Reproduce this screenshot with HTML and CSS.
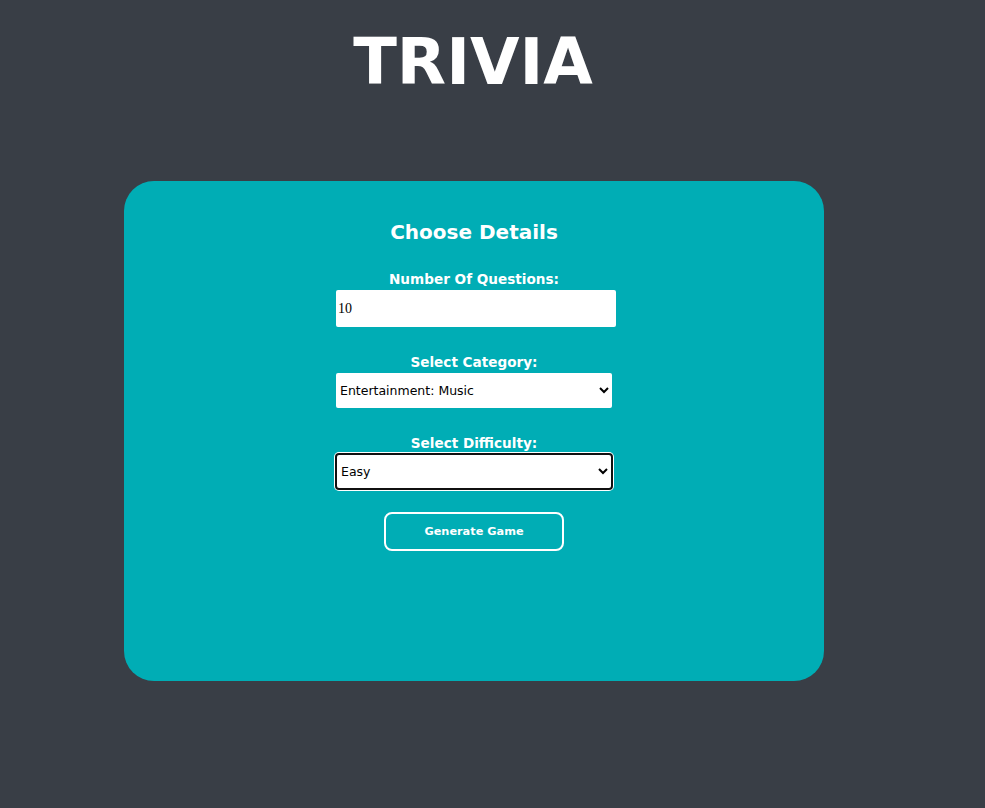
FILE: index.html
```html
<!DOCTYPE html>
<html lang="en">
<head>
<meta charset="utf-8">
<title>Trivia</title>
<link rel="stylesheet" href="styles.css">
</head>
<body>
<div class="page">
  <h1 class="title">TRIVIA</h1>
  <div class="card">
    <h2 class="card-title">Choose Details</h2>
    <label class="field-label" for="num">Number Of Questions:</label>
    <input class="num-input" id="num" type="number" value="10">
    <label class="field-label gap" for="cat">Select Category:</label>
    <select class="select" id="cat">
      <option>Entertainment: Music</option>
    </select>
    <label class="field-label gap" for="diff">Select Difficulty:</label>
    <select class="select focused" id="diff">
      <option>Easy</option>
    </select>
    <button class="btn" type="button">Generate Game</button>
  </div>
</div>
</body>
</html>
```

FILE: styles.css
```css
html, body {
  margin: 0;
  padding: 0;
}
body {
  background: #393e46;
  color: #ffffff;
  font-family: "Comic Sans MS", "DejaVu Sans", sans-serif;
  min-height: 808px;
}
.page {
  width: 700px;
  margin-left: 124px;
  padding-top: 22px;
}
.title {
  margin: 0;
  text-align: center;
  font-size: 64px;
  line-height: 80px;
  font-weight: 700;
  padding-right: 2px;
}
.card {
  margin-top: 79px;
  height: 500px;
  box-sizing: border-box;
  background: #00adb5;
  border-radius: 30px;
  padding-top: 36px;
  display: flex;
  flex-direction: column;
  align-items: center;
}
.card-title {
  margin: 0 0 22px;
  font-size: 20px;
  line-height: 30px;
  font-weight: 700;
}
.field-label {
  font-size: 13.6px;
  line-height: 20px;
  font-weight: 700;
}
.field-label.gap {
  margin-top: 25px;
}
.num-input {
  margin-top: 1px;
  margin-left: 4px;
  width: 280px;
  height: 37px;
  box-sizing: border-box;
  border: none;
  border-radius: 2px;
  padding: 0 2px;
  background: #fff;
  color: #000;
  font-family: "Liberation Serif", serif;
  font-size: 14px;
  outline: none;
}
.num-input::-webkit-inner-spin-button,
.num-input::-webkit-outer-spin-button {
  -webkit-appearance: none;
  margin: 0;
}
.select {
  margin-top: 1px;
  width: 276px;
  height: 35px;
  box-sizing: border-box;
  border: none;
  border-radius: 2px;
  background: #fff;
  color: #000;
  font-family: "Comic Sans MS", "DejaVu Sans", sans-serif;
  font-size: 12.5px;
  padding: 0;
}
.select.focused {
  border: 2px solid #101010;
  border-radius: 4px;
  box-shadow: 0 0 0 1px #ffffff;
  width: 278px;
  height: 37px;
  margin-top: 0;
}
.btn {
  margin-top: 22px;
  width: 180px;
  height: 39px;
  box-sizing: border-box;
  background: transparent;
  border: 2px solid #ffffff;
  border-radius: 8px;
  color: #fff;
  font-family: "Comic Sans MS", "DejaVu Sans", sans-serif;
  font-weight: 700;
  font-size: 11.3px;
}
```
